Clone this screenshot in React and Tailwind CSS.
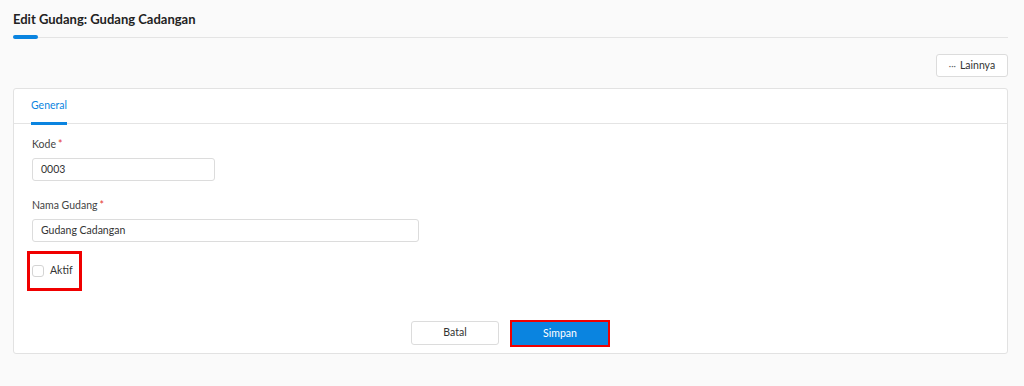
export default function App() {
  return (
    <div className="min-h-[386px] w-[1024px] bg-[#fafafa] px-[13px] pt-[11px] text-[#333] font-['Lato','Liberation_Sans',sans-serif]">
      <h1 className="text-[13px] font-bold leading-[16px] text-[#222]">Edit Gudang: Gudang Cadangan</h1>
      <div className="relative mt-[10px] h-px w-[995px] bg-[#e4e4e4]">
        <div className="absolute left-0 top-[-2px] h-[4px] w-[25px] rounded-full bg-[#0a84e0]" />
      </div>

      <div className="mt-[16px] flex w-[995px] justify-end">
        <button className="flex h-[23px] w-[72px] items-center justify-center gap-[4px] rounded-[3px] border border-[#dcdcdc] bg-white text-[10.5px] text-[#333]">
          <span className="text-[9px] leading-none text-[#666]">···</span>
          <span>Lainnya</span>
        </button>
      </div>

      <div className="mt-[11px] h-[266px] w-[995px] rounded-[3px] border border-[#e2e2e2] bg-white">
        <div className="flex h-[35px] border-b border-[#e4e4e4] px-[17px]">
          <div className="relative flex items-center text-[10.5px] text-[#0a84e0]">
            General
            <div className="absolute bottom-[-2px] left-0 right-0 h-[3px] bg-[#0a84e0]" />
          </div>
        </div>

        <div className="px-[18px] pt-[13px]">
          <label className="block text-[10.5px] leading-[14px] text-[#444]">
            Kode<span className="ml-[2px] text-[#e53935]">*</span>
          </label>
          <div className="mt-[7px] flex h-[23px] w-[183px] items-center rounded-[3px] border border-[#dcdcdc] px-[8px] text-[10.5px] text-[#333]">
            0003
          </div>

          <label className="mt-[17px] block text-[10.5px] leading-[14px] text-[#444]">
            Nama Gudang<span className="ml-[2px] text-[#e53935]">*</span>
          </label>
          <div className="mt-[7px] flex h-[23px] w-[387px] items-center rounded-[3px] border border-[#dcdcdc] px-[8px] text-[10.5px] text-[#333]">
            Gudang Cadangan
          </div>

          <div className="ml-[-5px] mt-[9px] flex h-[40px] w-[55px] items-center gap-[6px] border-[3px] border-[#f00000] pl-[2px]">
            <div className="h-[12px] w-[12px] rounded-[3px] border border-[#d4d4d4] bg-white" />
            <span className="text-[10.5px] text-[#333]">Aktif</span>
          </div>

          <div className="mt-[30px] flex justify-center gap-[11px]">
            <button className="h-[24px] w-[88px] rounded-[3px] border border-[#dcdcdc] bg-white text-[10.5px] text-[#333]">
              Batal
            </button>
            <button className="mt-[-1px] h-[27px] w-[100px] border-[2px] border-[#f00000] bg-[#0a84e0] text-[10.5px] text-white">
              Simpan
            </button>
          </div>
        </div>
      </div>
    </div>
  );
}
